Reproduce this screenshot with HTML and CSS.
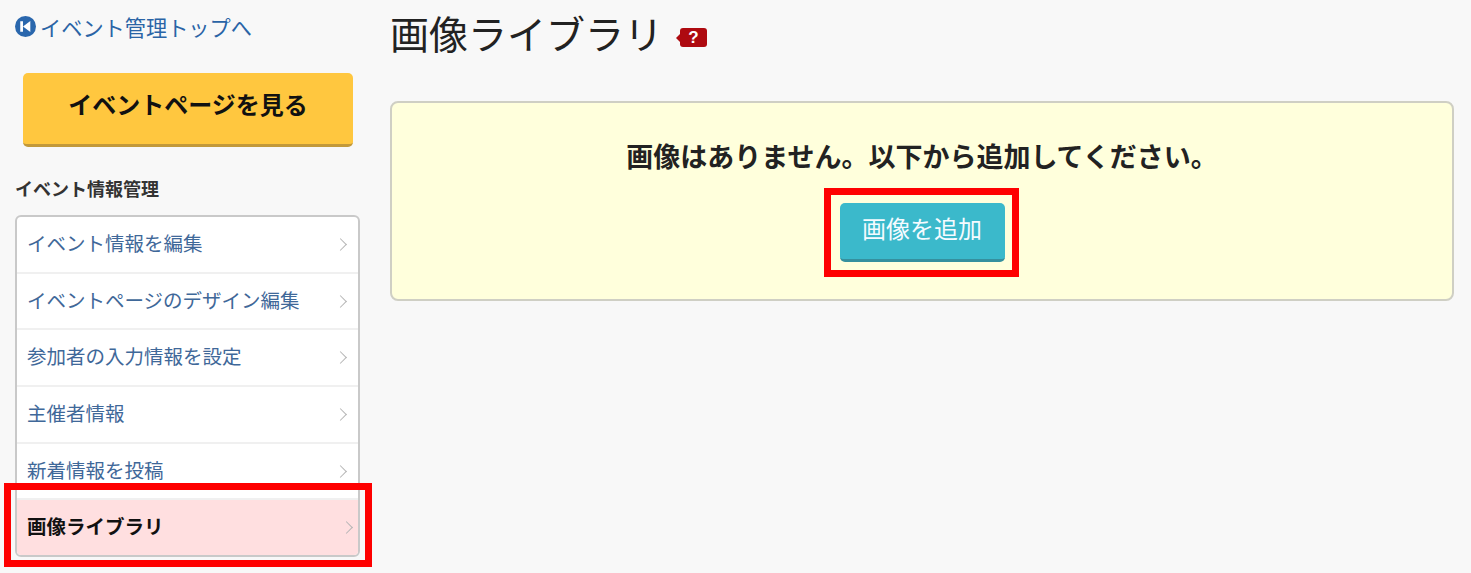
FILE: index.html
```html
<!DOCTYPE html>
<html lang="ja">
<head>
<meta charset="utf-8">
<title>画像ライブラリ</title>
<link rel="stylesheet" href="styles.css">
</head>
<body>
<div class="page">
  <aside class="sidebar">
    <a class="top-link" href="#">
      <svg class="back-icon" viewBox="0 0 20 20" aria-hidden="true">
        <circle cx="10" cy="10" r="10" fill="#2a67ad"/>
        <rect x="5" y="5" width="2.6" height="10" fill="#fff"/>
        <path d="M14.6 4.8v10.4L7.6 10z" fill="#fff"/>
      </svg>
      <span>イベント管理トップへ</span>
    </a>
    <a class="view-btn" href="#">イベントページを見る</a>
    <h2 class="side-heading">イベント情報管理</h2>
    <ul class="menu">
      <li class="menu-item"><a href="#"><span>イベント情報を編集</span><i class="chev"></i></a></li>
      <li class="menu-item"><a href="#"><span>イベントページのデザイン編集</span><i class="chev"></i></a></li>
      <li class="menu-item"><a href="#"><span>参加者の入力情報を設定</span><i class="chev"></i></a></li>
      <li class="menu-item"><a href="#"><span>主催者情報</span><i class="chev"></i></a></li>
      <li class="menu-item"><a href="#"><span>新着情報を投稿</span><i class="chev"></i></a></li>
      <li class="menu-item active"><a href="#"><span>画像ライブラリ</span><i class="chev"></i></a></li>
    </ul>
    <div class="mark mark-side"></div>
  </aside>
  <main class="main">
    <div class="title-row">
      <h1 class="title">画像ライブラリ</h1>
      <span class="help"><span class="help-q">?</span></span>
    </div>
    <section class="notice">
      <p class="notice-text">画像はありません。以下から追加してください。</p>
      <div class="add-wrap">
        <a class="add-btn" href="#">画像を追加</a>
        <div class="mark mark-add"></div>
      </div>
    </section>
  </main>
</div>
</body>
</html>
```
FILE: styles.css
```css
* { box-sizing: border-box; }
html, body { margin: 0; padding: 0; height: 573px; overflow: hidden; }
body {
  background: #f8f8f8;
  font-family: "Noto Sans CJK JP", "Liberation Sans", sans-serif;
  color: #222;
}
a { text-decoration: none; }
.page { display: flex; align-items: flex-start; padding-left: 15px; gap: 30px; }
.sidebar { position: relative; width: 345px; flex: none; padding-top: 14px; }
.top-link { display: flex; align-items: center; gap: 4px; height: 27px; color: #2a64a6; font-size: 21.2px; line-height: 25px; padding-bottom: 2px; }
.back-icon { width: 21px; height: 21px; flex: none; }
.view-btn {
  display: flex; align-items: center; justify-content: center;
  width: 330px; height: 74px; margin: 32px 0 0 8px; padding-bottom: 10px;
  background: #ffc73f; border-bottom: 3px solid #c2993a; border-radius: 5px;
  color: #111; font-size: 24px; font-weight: 700;
}
.side-heading { margin: 28px 0 0; height: 26px; font-size: 18px; line-height: 26px; font-weight: 700; color: #333; }
.menu {
  list-style: none; margin: 14px 0 0; padding: 0;
  height: 342px; background: #fff;
  border: 2px solid #c9c9c9; border-radius: 6px; overflow: hidden;
  display: flex; flex-direction: column;
}
.menu-item { flex: 1 1 0; border-bottom: 2px solid #f0f0f0; }
.menu-item:last-child { border-bottom: 0; }
.menu-item a {
  display: flex; align-items: center; justify-content: space-between;
  height: 100%; padding: 0 11px 4px 10px;
  color: #3f6899; font-size: 19.5px;
}
.chev { width: 9px; height: 9px; border-top: 1.5px solid #b5b5b5; border-right: 1.5px solid #b5b5b5; transform: rotate(45deg); margin: 4px 2px 0 0; }
.menu-item.active { background: #ffdfe0; }
.menu-item.active a { color: #111; font-weight: 700; padding-right: 5px; }
.mark { position: absolute; border: 7px solid #fe0000; pointer-events: none; }
.mark-side { left: -11px; top: 483px; width: 368px; height: 84px; }
.main { width: 1064px; flex: none; }
.title-row { display: flex; align-items: center; height: 68px; }
.title { margin: 0; font-size: 39px; line-height: 64px; padding-bottom: 4px; font-weight: 400; color: #222; }
.help {
  position: relative; display: flex; align-items: center; justify-content: center;
  width: 27px; height: 19px; margin: 7px 0 0 17px;
  background: #ae0a10; border-radius: 3px;
}
.help::before {
  content: ""; position: absolute; left: -4px; top: 6px;
  border-top: 4px solid transparent; border-bottom: 4px solid transparent; border-right: 4px solid #ae0a10;
}
.help-q { color: #fff; font-family: "Liberation Sans", sans-serif; font-size: 17px; font-weight: 700; line-height: 19px; }
.notice {
  margin-top: 33px; height: 200px; padding-top: 34px;
  background: #ffffdc; border: 2px solid #cfcfc4; border-radius: 8px;
  display: flex; flex-direction: column; align-items: center;
}
.notice-text { margin: 0; font-size: 27px; line-height: 38px; font-weight: 700; color: #222; }
.add-wrap { position: relative; margin-top: 28px; }
.add-btn {
  display: flex; align-items: center; justify-content: center;
  width: 165px; height: 59px; padding-bottom: 8px;
  background: #3bb9cb; border-bottom: 3px solid #35909e; border-radius: 5px;
  color: #f4fbff; font-size: 24px;
}
.mark-add { left: -16px; top: -15px; width: 195px; height: 89px; }
```
